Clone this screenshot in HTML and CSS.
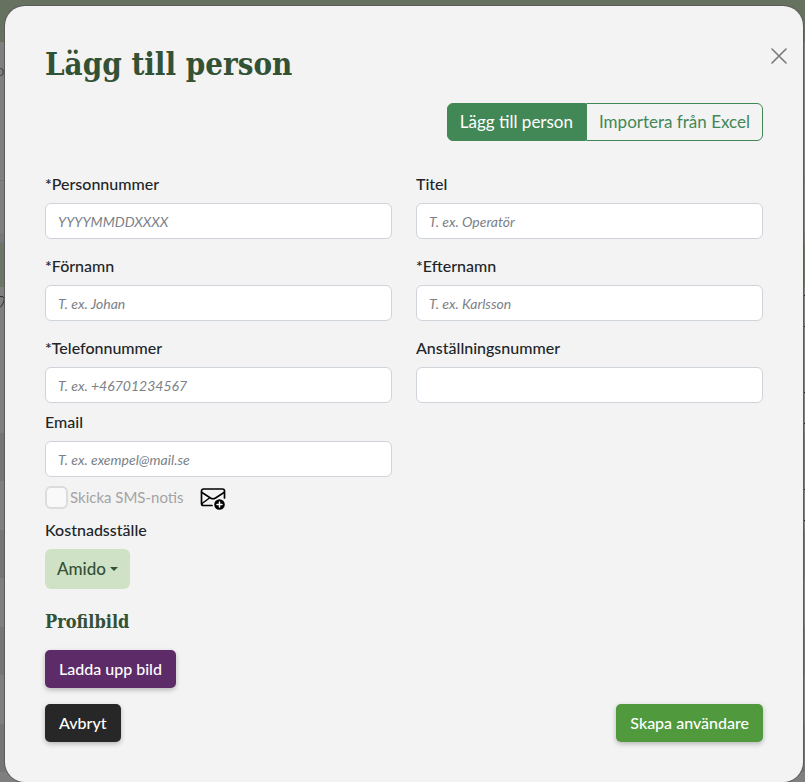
FILE: index.html
```html
<!DOCTYPE html>
<html lang="sv">
<head>
<meta charset="utf-8">
<meta name="viewport" content="width=device-width, initial-scale=1">
<title>Lägg till person</title>
<link rel="stylesheet" href="styles.css">
</head>
<body>
<div class="backdrop" aria-hidden="true">
  <div class="band band-header"></div>
  <div class="band band-top"><span class="crumb">or</span></div>
  <div class="band band-search"></div>
  <div class="band band-head"></div>
  <div class="band band-green"></div>
  <div class="band band-body">
    <svg class="handle" width="5" height="14" viewBox="0 0 5 14" fill="none" stroke="#2b2b2b" stroke-width="1"><path d="M0 1.500Q4 1 4.300 3.500T1.500 11L0 12.500"/></svg>
    <div class="row-boxes">
      <i class="row-box"></i>
      <i class="row-box"></i>
      <i class="row-box"></i>
    </div>
  </div>
  <div class="band-rows"></div>
</div>
<main class="dialog" role="dialog" aria-labelledby="title">
  <header class="dialog-head">
    <h1 id="title">Lägg till person</h1>
    <button class="close" type="button" aria-label="Stäng">
      <svg width="16" height="16" viewBox="0 0 16 16" fill="none" stroke="currentColor" stroke-width="1.600" stroke-linecap="round"><path d="M1 1l14 14M15 1L1 15"/></svg>
    </button>
  </header>
  <div class="tabs">
    <button class="tab tab-active" type="button">Lägg till person</button>
    <button class="tab" type="button">Importera från Excel</button>
  </div>
  <form class="form">
    <div class="grid">
      <div class="field"><label for="pnr">*Personnummer</label><input id="pnr" type="text" placeholder="YYYYMMDDXXXX"></div>
      <div class="field"><label for="titel">Titel</label><input id="titel" type="text" placeholder="T. ex. Operatör"></div>
      <div class="field"><label for="fn">*Förnamn</label><input id="fn" type="text" placeholder="T. ex. Johan"></div>
      <div class="field"><label for="en">*Efternamn</label><input id="en" type="text" placeholder="T. ex. Karlsson"></div>
      <div class="field"><label for="tel">*Telefonnummer</label><input id="tel" type="tel" placeholder="T. ex. +46701234567"></div>
      <div class="field"><label for="anst">Anställningsnummer</label><input id="anst" type="text"></div>
    </div>
    <div class="grid grid-email">
      <div class="field"><label for="mail">Email</label><input id="mail" type="email" placeholder="T. ex. exempel@mail.se"></div>
    </div>
    <div class="notice">
      <input id="sms" type="checkbox" disabled>
      <label for="sms">Skicka SMS-notis</label>
      <svg class="mail" width="26" height="22" viewBox="0 0 26 22" fill="none" stroke="#000" stroke-width="1.700" stroke-linecap="round" stroke-linejoin="round">
        <path d="M12 17.500H3.500a2 2 0 0 1-2-2V3a2 2 0 0 1 2-2h19a2 2 0 0 1 2 2v7"/>
        <path d="M2 4.500l8.500 5.500q2.500 1.500 5 0L24 4.500M2 15.500l7.500-5.500" stroke-width="1.500"/>
        <circle cx="19.500" cy="16.500" r="5.300" fill="#000" stroke="none"/>
        <path d="M19.500 14v5M17 16.500h5" stroke="#fff" stroke-width="1.500"/>
      </svg>
    </div>
    <span class="cost-label" id="cost">Kostnadsställe</span>
    <button class="dropdown" type="button" aria-describedby="cost">Amido<span class="caret"></span></button>
    <h2>Profilbild</h2>
    <button class="btn btn-upload" type="button">Ladda upp bild</button>
    <div class="actions">
      <button class="btn btn-cancel" type="button">Avbryt</button>
      <button class="btn btn-create" type="submit">Skapa användare</button>
    </div>
  </form>
</main>
</body>
</html>
```
FILE: styles.css
```css
* { box-sizing: border-box; }
body {
  margin: 0;
  min-height: 100vh;
  overflow: hidden;
  background: #7f7f7f;
  color: #212529;
  font: 16px/24px Lato, "Open Sans", sans-serif;
}
button, input { font: inherit; margin: 0; }
button { cursor: pointer; }
h1, h2 {
  margin: 0;
  color: #335135;
  font-family: "DejaVu Serif Condensed", "DejaVu Serif", serif;
  font-weight: 700;
}
.backdrop {
  position: absolute;
  inset: 0;
  display: flex;
  flex-direction: column;
  overflow: hidden;
}
.band { flex: none; }
.band-header { height: 42px; background: #667160; }
.band-top { height: 139px; padding-top: 16px; border-bottom: 1px solid #737373; }
.crumb { display: block; margin-left: -4px; color: #4a4f55; font-size: 15px; }
.band-search { height: 52px; }
.band-head { height: 10px; background: #787878; }
.band-green { height: 44px; background: #6b7665; }
.band-body { display: flex; justify-content: space-between; height: 146px; padding-top: 8px; }
.band-rows {
  flex: 1;
  background: repeating-linear-gradient(#737672 0 48px, #7f7f7f 48px 97px);
}
.row-boxes { display: flex; flex-direction: column; gap: 65px; height: 0; z-index: 1; }
.row-box { flex: none; width: 2px; height: 32px; border: solid #222; border-width: 1px 0; }
.dialog {
  position: relative;
  z-index: 2;
  margin: 6px 2px 0 5px;
  padding: 36px 40px 40px;
  border-radius: 20px;
  background: #f3f3f3;
  box-shadow: 0 0 0 1px #5b5b5b;
}
.dialog-head {
  display: flex;
  justify-content: space-between;
  align-items: flex-start;
}
h1 { font-size: 31px; line-height: 44px; }
.close {
  display: flex;
  margin: 6px -24px 0 0;
  padding: 0;
  border: 0;
  background: none;
  color: #797979;
}
.tabs { display: flex; justify-content: flex-end; margin-top: 17px; }
.tab {
  height: 38px;
  padding: 0 12px;
  border: 1px solid #428756;
  border-radius: 0 6px 6px 0;
  background: transparent;
  color: #428756;
  font-size: 17px;
}
.tab-active {
  border-radius: 6px 0 0 6px;
  background: #428756;
  color: #fff;
}
.form { margin-top: 32px; }
.grid {
  display: grid;
  grid-template-columns: 1fr 1fr;
  gap: 16px 24px;
}
.grid-email { margin-top: 8px; }
.field { display: flex; flex-direction: column; gap: 8px; }
.field label, .cost-label { font-size: 16px; line-height: 22px; font-weight: 500; }
.field input {
  width: 100%;
  height: 36px;
  padding: 0 12px;
  border: 1px solid #ced4da;
  border-radius: 6px;
  background: #fff;
  font-size: 14px;
}
.field input::placeholder { color: #7b8188; font-style: italic; opacity: 1; }
.notice {
  display: flex;
  align-items: center;
  height: 24px;
  margin-top: 8px;
  color: #a3a3a3;
  font-size: 15px;
}
.notice input {
  appearance: none;
  width: 23px;
  height: 23px;
  margin-right: 2px;
  border: 2px solid #dcdcdc;
  border-radius: 6px;
  background: #f9f9f9;
}
.mail { margin: 4px 0 0 16px; }
.cost-label { display: block; margin-top: 10px; }
.dropdown {
  display: flex;
  align-items: center;
  gap: 4px;
  height: 40px;
  margin-top: 8px;
  padding: 0 12px;
  border: 0;
  border-radius: 6px;
  background: #cfe2c5;
  color: #335135;
  font-size: 17px;
  font-weight: 500;
}
.caret { border: 4px solid transparent; border-top-color: currentColor; border-bottom: 0; }
h2 { margin-top: 21px; font-size: 18px; line-height: 24px; }
.btn {
  height: 38px;
  padding: 0 14px;
  border: 0;
  border-radius: 5px;
  color: #fff;
  font-weight: 500;
  box-shadow: 0 2px 5px rgba(0, 0, 0, 0.25);
}
.btn-upload { display: block; margin-top: 16px; background: #5e2b69; }
.btn-cancel { background: #272727; }
.btn-create { background: #50993c; }
.actions { display: flex; justify-content: space-between; margin-top: 16px; }
```
